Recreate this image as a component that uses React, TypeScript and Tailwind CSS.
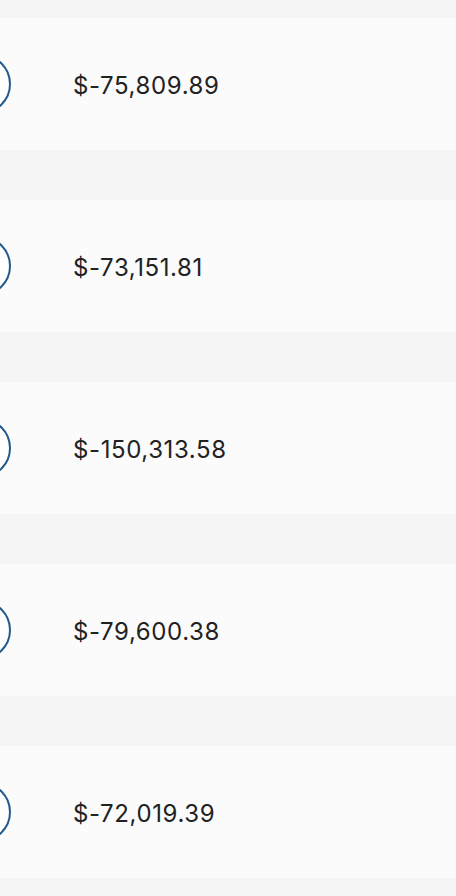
import React from "react";

const amounts = ["$-75,809.89", "$-73,151.81", "$-150,313.58", "$-79,600.38", "$-72,019.39"];

export default function App() {
  return (
    <div className="min-h-[896px] w-full overflow-hidden bg-[#f5f5f5] pt-[18px] pb-[18px] flex flex-col gap-[50px]">
      {amounts.map((a) => (
        <div key={a} className="h-[132px] w-full bg-[#fbfbfb] flex items-center overflow-hidden">
          <div className="shrink-0 ml-[-49px] w-[60px] h-[60px] rounded-full border-2 border-[#215a8c] bg-white" />
          <div
            className="ml-[62px] mt-[4px] text-[24px] leading-none tracking-[0.6px] text-[#222222]"
            style={{ fontFamily: "Inter, 'Open Sans', sans-serif" }}
          >
            {a}
          </div>
        </div>
      ))}
    </div>
  );
}
